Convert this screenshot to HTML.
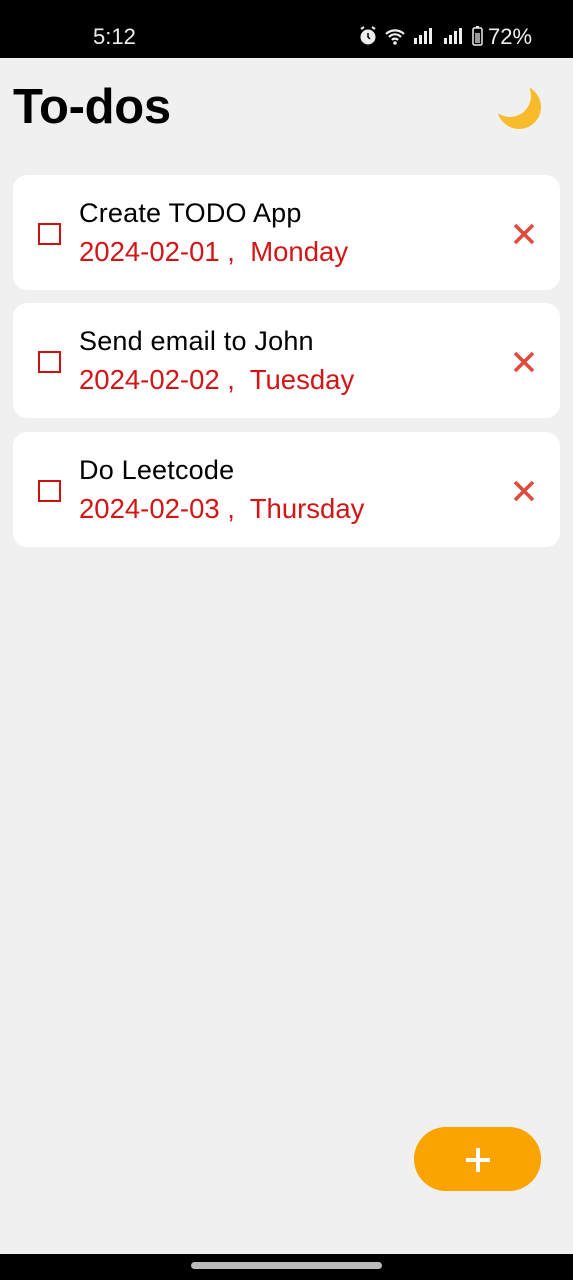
<!DOCTYPE html>
<html><head><meta charset="utf-8"><style>
*{margin:0;padding:0;box-sizing:border-box}
body{width:573px;height:1280px;background:#f0f0f0;font-family:"Liberation Sans",Roboto,sans-serif;position:relative;overflow:hidden}
.sb{position:absolute;left:0;top:0;width:573px;height:58px;background:#000;color:#eee}
.time{position:absolute;left:93px;top:24px;font-size:22px}
.pct{position:absolute;left:488px;top:24px;font-size:22px}
h1{position:absolute;left:13px;top:79px;font-size:49px;font-weight:bold;color:#000;letter-spacing:-0.3px}
.card{position:absolute;left:13px;width:547px;height:115px;background:#fff;border-radius:14px}
.cb{position:absolute;left:25px;top:48px;width:23px;height:22px;border:2px solid #d01010}
.t{position:absolute;left:66px;top:23px;font-size:27px;color:#000;letter-spacing:0.2px}
.d{position:absolute;left:66px;top:61px;font-size:27.5px;color:#d41515;white-space:pre}
.x{position:absolute;left:499px;top:47px}
.fab{position:absolute;left:414px;top:1127px;width:127px;height:64px;border-radius:32px;background:#fba300}
.nav{position:absolute;left:0;top:1254px;width:573px;height:26px;background:#000}
.pill{position:absolute;left:191px;top:1262px;width:191px;height:7px;border-radius:4px;background:#bbb}
</style></head><body>
<div class="sb"><div class="time">5:12</div>
<svg style="position:absolute;left:358px;top:25px" width="128" height="22" viewBox="0 0 128 22">
<circle cx="10" cy="12" r="7.5" fill="#eee"/><path d="M10 8v4l2 2" stroke="#000" stroke-width="1.5" fill="none"/>
<path d="M3 4l3-2M17 4l-3-2" stroke="#eee" stroke-width="2"/>
<path d="M28 9a13 13 0 0 1 18 0M31 12a8 8 0 0 1 12 0M34 15a4 4 0 0 1 6 0" stroke="#eee" stroke-width="2.2" fill="none"/><circle cx="37" cy="18" r="1.8" fill="#eee"/>
<rect x="56" y="13" width="3" height="6" fill="#eee"/><rect x="61" y="10" width="3" height="9" fill="#eee"/><rect x="66" y="6" width="3" height="13" fill="#eee"/><rect x="71" y="3" width="3" height="16" fill="#eee"/>
<rect x="86" y="13" width="3" height="6" fill="#eee"/><rect x="91" y="10" width="3" height="9" fill="#eee"/><rect x="96" y="6" width="3" height="13" fill="#eee"/><rect x="101" y="3" width="3" height="16" fill="#eee"/>
<rect x="115" y="3" width="9" height="17" rx="1.5" stroke="#eee" stroke-width="1.5" fill="none"/><rect x="118" y="1" width="3" height="2" fill="#eee"/><rect x="117" y="8" width="5" height="10" fill="#999"/>
</svg>
<div class="pct">72%</div></div>
<h1>To-dos</h1>
<svg style="position:absolute;left:495px;top:85px" width="50" height="48" viewBox="0 0 50 48">
<defs><mask id="m"><rect width="50" height="48" fill="#fff"/><circle cx="15" cy="11" r="21" fill="#000"/></mask></defs>
<circle cx="24" cy="22" r="22" fill="#f7bb2c" mask="url(#m)"/>
</svg>

<div class="card" style="top:175px"><div class="cb"></div><div class="t">Create TODO App</div><div class="d">2024-02-01 ,  Monday</div>
<svg class="x" width="24" height="24" viewBox="0 0 24 24"><path d="M3 3L21 21M21 3L3 21" stroke="#e04a3e" stroke-width="3.6"/></svg></div>
<div class="card" style="top:303px"><div class="cb"></div><div class="t">Send email to John</div><div class="d">2024-02-02 ,  Tuesday</div>
<svg class="x" width="24" height="24" viewBox="0 0 24 24"><path d="M3 3L21 21M21 3L3 21" stroke="#e04a3e" stroke-width="3.6"/></svg></div>
<div class="card" style="top:432px"><div class="cb"></div><div class="t">Do Leetcode</div><div class="d">2024-02-03 ,  Thursday</div>
<svg class="x" width="24" height="24" viewBox="0 0 24 24"><path d="M3 3L21 21M21 3L3 21" stroke="#e04a3e" stroke-width="3.6"/></svg></div>

<div class="fab"><svg style="position:absolute;left:51px;top:20px" width="26" height="26" viewBox="0 0 26 26"><path d="M13 1V25M1 13H25" stroke="#fff" stroke-width="4"/></svg></div>
<div class="nav"></div><div class="pill"></div>
</body></html>
